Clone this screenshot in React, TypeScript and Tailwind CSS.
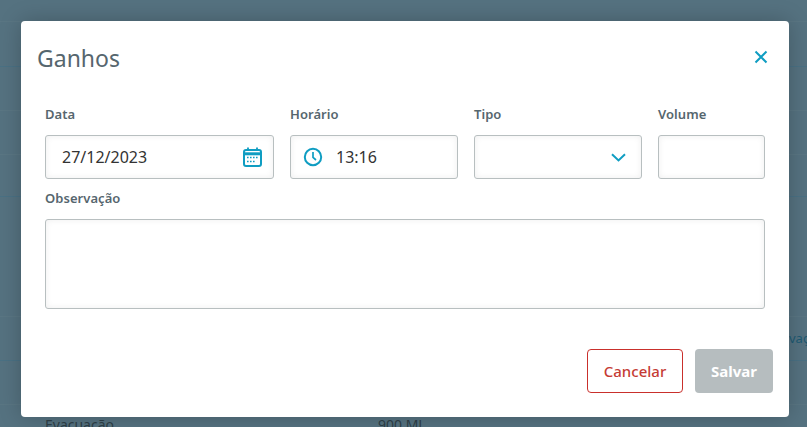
import React from 'react';

const Label = ({ children }: { children: React.ReactNode }) => (
  <label className="block h-[14px] text-[13px] leading-[14px] font-semibold tracking-[0.05px] text-[#56666e] mb-[14px]">{children}</label>
);

const fieldClass =
  'flex items-center h-[44px] rounded-[3px] border border-[#b8bfc0] bg-white shadow-[inset_0_0_6px_rgba(0,0,0,0.07)] text-[16px] text-[#333333]';

const rowLines = [
  'h-[22px] border-[#5a7683]',
  'h-[45px] border-[#4a7184]',
  'h-[44px] border-[#5a7683]',
  'h-[44px] border-[#5a7683]',
  'h-[42px] border-[#4a7184]',
  'h-[120px] border-[#5a7683]',
  'h-[44px] border-[#4a7184]',
  'h-[44px] border-[#5a7683]',
];

export default function App() {
  return (
    <div className="relative w-[807px] h-[427px] overflow-hidden bg-[#557280] font-['Noto_Sans',sans-serif]">
      {/* page behind the overlay */}
      <div className="w-full">
        {rowLines.map((r, i) => (
          <div key={i} className={`${r} border-b`} />
        ))}
        <div className="flex pl-[45px] pt-[11px] text-[14px] leading-[18px] text-[#2e3f47]">
          <span className="w-[333px]">Evacuação</span>
          <span>900 ML</span>
        </div>
      </div>
      <span className="absolute left-[789px] top-[330px] text-[13px] leading-[16px] text-[#1d5a73]">vaç</span>

      {/* modal */}
      <div className="absolute left-[21px] top-[21px] w-[768px] h-[396px] rounded-[4px] bg-white shadow-[0_0_22px_rgba(0,0,0,0.22)]">
        <div className="flex items-center justify-between h-[74px] pl-[16px] pr-[20px]">
          <h2 className="text-[23px] font-normal text-[#56666e]">Ganhos</h2>
          <button className="text-[#0f9dc2] -translate-y-[1px]">
            <svg width="16" height="16" viewBox="0 0 16 16" fill="none" stroke="currentColor" strokeWidth="2">
              <path d="M2.5 2.5 13.5 13.5M13.5 2.5 2.5 13.5" />
            </svg>
          </button>
        </div>

        <div className="px-[24px] pt-[12px]">
          <div className="flex gap-[16px]">
            <div className="w-[229px]">
              <Label>Data</Label>
              <div className={`${fieldClass} justify-between pl-[16px] pr-[11px]`}>
                <span>27/12/2023</span>
                <svg width="19" height="20" viewBox="0 0 19 20" fill="none" className="text-[#0f9dc2]">
                  <rect x="1" y="3" width="17" height="16" rx="2" stroke="currentColor" strokeWidth="2" />
                  <path d="M1 6.8h17" stroke="currentColor" strokeWidth="3" />
                  <path d="M5 0.5v3M14 0.5v3" stroke="currentColor" strokeWidth="1.8" />
                  <path d="M4 10.5h2M7 10.5h2M10 10.5h2M13 10.5h2M4 14.5h2M7 14.5h2M10 14.5h2" stroke="currentColor" strokeWidth="1.6" strokeDasharray="1.6 1.4" />
                </svg>
              </div>
            </div>
            <div className="w-[168px]">
              <Label>Horário</Label>
              <div className={`${fieldClass} pl-[12px] gap-[13px]`}>
                <svg width="20" height="20" viewBox="0 0 20 20" fill="none" stroke="currentColor" strokeWidth="2" className="text-[#0f9dc2]">
                  <circle cx="10" cy="10" r="8.2" />
                  <path d="M10 5v5.4l3 2.6" strokeWidth="1.7" />
                </svg>
                <span>13:16</span>
              </div>
            </div>
            <div className="w-[168px]">
              <Label>Tipo</Label>
              <div className={`${fieldClass} justify-end pr-[15px]`}>
                <svg width="15" height="9" viewBox="0 0 15 9" fill="none" stroke="currentColor" strokeWidth="2" className="text-[#0f9dc2]">
                  <path d="M1 1.2 7.5 7.4 14 1.2" />
                </svg>
              </div>
            </div>
            <div className="w-[107px]">
              <Label>Volume</Label>
              <div className={fieldClass} />
            </div>
          </div>

          <div className="mt-[12px]">
            <Label>Observação</Label>
            <div className={`${fieldClass} h-[90px]`} />
          </div>
        </div>

        <div className="flex justify-end gap-[12px] pr-[16px] pt-[40px]">
          <button className="w-[96px] h-[44px] rounded-[4px] border border-[#c9302c] bg-white text-[15px] font-medium text-[#c53b34]">Cancelar</button>
          <button className="w-[78px] h-[44px] rounded-[4px] bg-[#b6bdbf] text-[15px] font-bold text-white">Salvar</button>
        </div>
      </div>
    </div>
  );
}
